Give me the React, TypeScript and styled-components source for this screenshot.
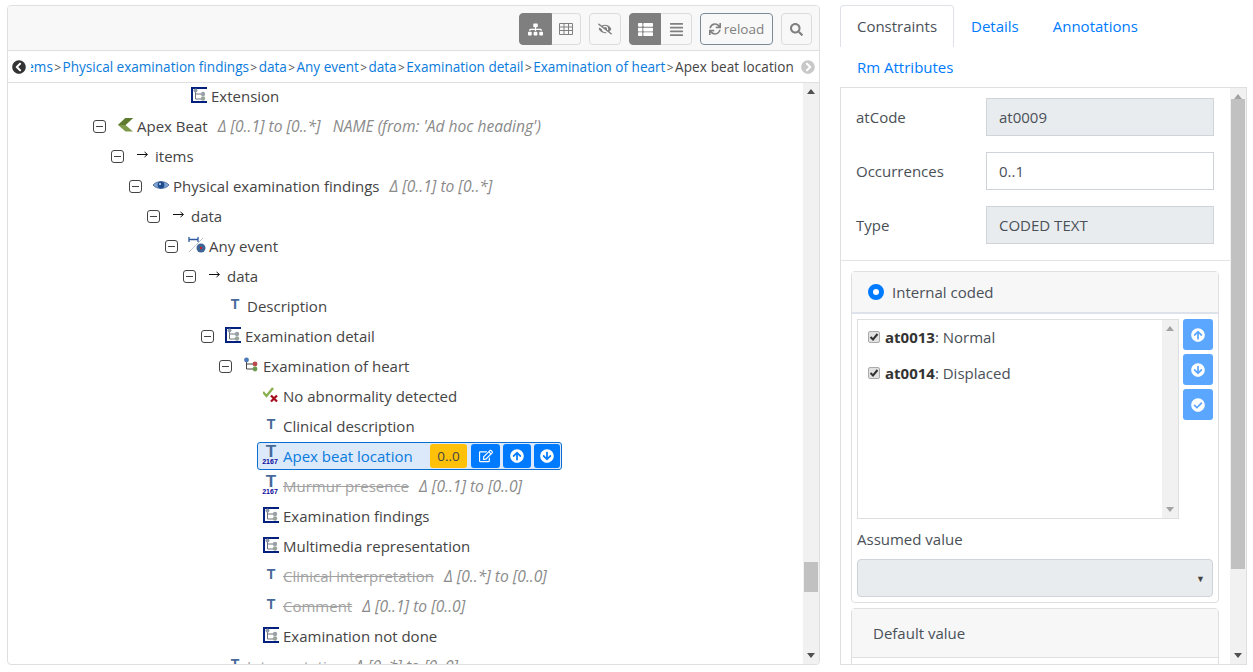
import React from 'react';
import styled, { createGlobalStyle } from 'styled-components';
import {
  FaSitemap, FaEyeSlash, FaThList, FaAlignJustify, FaSync, FaSearch,
  FaChevronCircleLeft, FaChevronCircleRight, FaRegEdit, FaArrowCircleUp, FaArrowCircleDown, FaCheckCircle,
} from 'react-icons/fa';

const Global = createGlobalStyle`
  html, body { margin: 0; padding: 0; background: #fff; overflow: hidden; }
  body { font-family: "Open Sans", "Noto Sans", "Liberation Sans", sans-serif; font-size: 14px; color: #495057; }
  * { box-sizing: border-box; }
`;

const Page = styled.div`
  display: flex; gap: 20px; width: 1253px; height: 672px; padding: 5px 6px 7px 7px;
`;
const LeftPanel = styled.section`
  width: 813px; height: 660px; display: flex; flex-direction: column; border: 1px solid #dfdfdf; border-radius: 4px; overflow: hidden;
`;
const Toolbar = styled.div`
  height: 45px; flex: none; background: #f8f8f8; border-bottom: 1px solid #dfdfdf; display: flex; justify-content: flex-end; align-items: flex-start; padding: 7px 7px 0 0; gap: 8px;
`;
const Group = styled.div`display: flex;`;
const ToolBtn = styled.button<{ $active?: boolean; $w: number; $pos?: 'l' | 'r' }>`
  width: ${p => p.$w}px; height: 32px; padding: 0; display: flex; align-items: center; justify-content: center; gap: 3px;
  font: inherit; font-size: 13.5px; color: ${p => (p.$active ? '#fff' : '#808080')};
  background: ${p => (p.$active ? '#7f7f7f' : '#f8f8f8')};
  border: 1px solid ${p => (p.$active ? '#7f7f7f' : '#dcdcdc')};
  border-radius: ${p => (p.$pos === 'l' ? '4px 0 0 4px' : p.$pos === 'r' ? '0 4px 4px 0' : '4px')};
  ${p => (p.$pos === 'r' ? 'border-left: none;' : '')}
`;
const ReloadBtn = styled(ToolBtn)`border-color: #7c8a97;`;
const Crumbs = styled.div`
  height: 32px; flex: none; border-bottom: 1px solid #dfdfdf; display: flex; align-items: center; padding: 0 4px 0 4px;
`;
const CrumbTrack = styled.div`
  flex: 1; min-width: 0; margin: 1px 4px 0 5px; overflow: hidden; display: flex; justify-content: flex-end; white-space: nowrap; font-size: 13.55px; color: #444;
`;
const CrumbLink = styled.span`color: #0a7bdc; flex: none;`;
const CrumbSep = styled.span`color: #555; flex: none; margin: 0 1.4px; font-size: 12px; line-height: 19px;`;
const CrumbLast = styled.span`flex: none; margin-right: 3px; letter-spacing: 0.1px;`;
const TreeWrap = styled.div`flex: 1; min-height: 0; display: flex;`;
const Tree = styled.div`flex: 1; min-width: 0; overflow: hidden; margin-top: -2px;`;
const Row = styled.div<{ $level: number }>`
  height: 30px; display: flex; align-items: center; padding-left: ${p => 85 + 18 * p.$level}px; white-space: nowrap; font-size: 15px; color: #444;
`;
const Slot = styled.span<{ $leaf?: boolean }>`
  width: ${p => (p.$leaf ? 20 : 18)}px; flex: none; display: flex;
`;
const Expander = styled.span`
  width: 13px; height: 13px; border: 1px solid #444; border-radius: 3px; position: relative; display: block;
  &::after { content: ''; position: absolute; left: 2px; right: 2px; top: 5px; height: 1px; background: #444; }
`;
const Node = styled.div<{ $selected?: boolean }>`
  display: flex; align-items: center; height: 28px; padding-left: 5px; border: 1px solid ${p => (p.$selected ? '#0a6fd1' : 'transparent')};
  border-radius: 3px; background: ${p => (p.$selected ? '#dce9fa' : 'transparent')}; ${p => (p.$selected ? 'width: 305px;' : '')}
`;
const IconSlot = styled.span`
  width: 16px; height: 16px; flex: none; display: flex; align-items: center; justify-content: center; margin-right: 4px; margin-top: -2px;
  svg { flex: none; }
`;
const Label = styled.span<{ $struck?: boolean; $link?: boolean }>`
  color: ${p => (p.$struck ? '#a2a2a2' : p.$link ? '#0a7bdc' : '#444')};
  text-decoration: ${p => (p.$struck ? 'line-through' : 'none')};
`;
const Note = styled.span`margin-left: 10px; font-style: italic; color: #8a8a8a; white-space: pre; font-size: 15.6px;`;
const Actions = styled.span`margin-left: auto; display: flex; gap: 3px; padding-right: 1px;`;
const Occ = styled.span`width: 37px; height: 24px; background: #ffc107; border-radius: 3px; display: flex; align-items: center; justify-content: center; color: #444; margin-right: 1px; font-size: 13.5px;`;
const ActionBtn = styled.span<{ $w: number }>`width: ${p => p.$w}px; height: 24px; background: #007bff; border-radius: 3px; display: flex; align-items: center; justify-content: center; color: #fff; font-size: 14px;`;
const Scrollbar = styled.div`width: 16px; flex: none; background: #f1f1f1; display: flex; flex-direction: column; align-items: center; position: relative;`;
const ArrowUp = styled.span<{ $light?: boolean }>`width: 0; height: 0; margin-top: 6px; border: 4px solid transparent; border-top: none; border-bottom: 5px solid ${p => (p.$light ? '#a3a3a3' : '#505050')};`;
const ArrowDown = styled.span<{ $light?: boolean }>`width: 0; height: 0; margin-top: auto; margin-bottom: 6px; border: 4px solid transparent; border-bottom: none; border-top: 5px solid ${p => (p.$light ? '#a3a3a3' : '#505050')};`;
const Thumb = styled.div<{ $top: number; $h: number }>`width: 14px; height: ${p => p.$h}px; margin-top: ${p => p.$top}px; background: #c1c1c1; flex: none;`;

const RightPanel = styled.section`width: 407px; height: 660px; display: flex; flex-direction: column;`;
const Tabs = styled.nav`display: flex; flex-wrap: wrap; flex: none; height: 82px; align-content: flex-start; font-size: 15px;`;
const Tab = styled.span<{ $active?: boolean }>`
  height: 42px; width: ${p => (p.$active ? '114px' : 'auto')}; padding: 0 16px 2px; display: flex; align-items: center; justify-content: center; color: ${p => (p.$active ? '#495057' : '#007bff')};
  border: 1px solid ${p => (p.$active ? '#dee2e6' : 'transparent')}; border-bottom: none; border-radius: 4px 4px 0 0;
  ${p => (p.$active ? 'background:#fff;' : '')}
`;
const TabBreak = styled.span`flex-basis: 100%; height: 0;`;
const TabSecond = styled(Tab)`height: 40px;`;
const Content = styled.div`flex: 1; min-height: 0; border: 1px solid #dfdfdf; display: flex;`;
const Form = styled.div`flex: 1; min-width: 0; overflow: hidden; padding: 10px 0 0 0;`;
const Field = styled.div`display: flex; align-items: center; height: 38px; margin-bottom: 16px; padding-left: 15px; font-size: 15px;`;
const FieldLabel = styled.label`width: 130px; flex: none; color: #495057;`;
const Input = styled.div<{ $off?: boolean }>`
  width: 228px; height: 38px; border: 1px solid #ced4da; padding: 0 12px; display: flex; align-items: center; color: #495057;
  background: ${p => (p.$off ? '#e9ecef' : '#fff')};
`;
const Rule = styled.hr`margin: 0 0 10px 0; border: 0; border-top: 1px solid #e4e4e4;`;
const Card = styled.div`margin: 0 10px 5px 10px; border: 1px solid #dfdfdf; border-radius: 4px; width: 368px;`;
const CardHead = styled.div`height: 42px; background: #f7f7f7; border-bottom: 2px solid #dee2ea; display: flex; align-items: center; padding-left: 16px; font-size: 15px; gap: 8px;`;
const Radio = styled.span`width: 16px; height: 16px; border-radius: 50%; border: 5px solid #007bff; background: #fff; flex: none;`;
const CardBody = styled.div`padding: 5px 5px 5px 5px;`;
const ListRow = styled.div`display: flex; gap: 4px;`;
const ListBox = styled.div`width: 322px; height: 200px; border: 1px solid #dfdfdf; display: flex;`;
const Items = styled.div`flex: 1; padding: 0 0 0 10px; margin-top: -1px;`;
const Item = styled.div`height: 36px; display: flex; align-items: center; gap: 5px; font-size: 15px; color: #495057;`;
const Check = styled.span`width: 12px; height: 12px; border: 1px solid #aaa; border-radius: 2px; background: #e2e2e2; display: flex; align-items: center; justify-content: center; flex: none;`;
const Code = styled.b`color: #333; font-weight: 700;`;
const MoveCol = styled.div`display: flex; flex-direction: column; gap: 4px;`;
const MoveBtn = styled.span`width: 30px; height: 31px; background: #5ba6ff; border-radius: 3px; color: #fff; display: flex; align-items: center; justify-content: center; font-size: 14px;`;
const AssumedLabel = styled.div`margin-top: 5px; height: 30px; margin-bottom: 5px; font-size: 15px; display: flex; align-items: center; color: #495057;`;
const SelectBox = styled.div`width: 356px; height: 38px; background: #e9ecef; border: 1px solid #ced4da; border-radius: 4px; display: flex; align-items: center; justify-content: flex-end; padding-right: 7px; color: #444; font-size: 9px;`;
const CardHeadPlain = styled.div`height: 49px; background: #f7f7f7; border-bottom: 1px solid #dfdfdf; display: flex; align-items: center; padding-left: 21px; font-size: 15px;`;
const CardFill = styled.div`height: 60px;`;

const TIcon = ({ coded }: { coded?: boolean }) => (
  <svg width="18" height="20" viewBox="0 0 18 20">
    <text x="9" y={coded ? 12 : 14} textAnchor="middle" fontSize={coded ? 17 : 14} fontWeight="700" fontFamily="Liberation Sans, sans-serif" fill="#46689a">T</text>
    {coded && <text x="8" y="19" textAnchor="middle" fontSize="7" fontWeight="700" fontFamily="Liberation Sans, sans-serif" fill="#0a0a9a">2167</text>}
  </svg>
);
const GridIcon = () => (
  <svg width="14" height="12" viewBox="0 0 14 12">
    <path d="M.5.5h13v11H.5zM.5 4h13M.5 7.5h13M5 .5v11M9.5.5v11" fill="none" stroke="#808080" strokeWidth="1" />
  </svg>
);
const ClusterIcon = () => (
  <svg width="16" height="16" viewBox="0 0 16 16">
    <path d="M16 1H1v14h15" fill="none" stroke="#04207e" strokeWidth="2" />
    <path d="M4.5 3v9H11M4.5 7H11" fill="none" stroke="#70757c" strokeWidth="1" />
    <circle cx="4.5" cy="3.5" r="2" fill="#8f9aa8" /><circle cx="12" cy="7" r="2.2" fill="#9aa0a8" /><circle cx="12" cy="11.5" r="2.2" fill="#9aa59a" />
  </svg>
);
const TreeIcon = () => (
  <svg width="16" height="16" viewBox="0 0 16 16">
    <path d="M3.5 3v9H11M3.5 7H11" fill="none" stroke="#444" strokeWidth="1" />
    <circle cx="3.5" cy="3" r="2.4" fill="#4c78b8" /><circle cx="12" cy="7" r="2.4" fill="#b8484c" /><circle cx="12" cy="12" r="2.4" fill="#6a9a4c" />
  </svg>
);
const ArrowIcon = () => (
  <svg width="16" height="16" viewBox="0 0 16 16">
    <path d="M2 7.5h10M9.5 5l3 2.5-3 2.5" fill="none" stroke="#111" strokeWidth="1" />
  </svg>
);
const ChevronIcon = () => (
  <svg width="16" height="16" viewBox="0 0 16 16">
    <path d="M8.5 1 1 8l7.5 6.5H16L8.5 8 16 1z" fill="#7f9a4a" />
    <path d="M8.5 1 1 8h7.5L16 1z" fill="#5d7a2e" />
  </svg>
);
const EyeIcon = () => (
  <svg width="16" height="16" viewBox="0 0 16 16">
    <path d="M0 8C3 3.5 13 3.5 16 8 13 12.5 3 12.5 0 8z" fill="#7fa2cf" stroke="#3b5f96" strokeWidth=".8" />
    <circle cx="8" cy="8" r="3.4" fill="#1f4b8f" /><circle cx="7" cy="7" r="1" fill="#cfe0f5" />
  </svg>
);
const EventIcon = () => (
  <svg width="18" height="18" viewBox="0 0 18 18">
    <path d="M1 1v5M10 1v5M1 3.5h9" fill="none" stroke="#2d5aa0" strokeWidth="1.3" />
    <path d="M1 16 15 2" stroke="#b8c0c8" strokeWidth="1" />
    <circle cx="13" cy="12" r="4.5" fill="#3c6595" /><circle cx="13" cy="12" r="1.2" fill="#d0202a" />
  </svg>
);
const BoolIcon = () => (
  <svg width="16" height="16" viewBox="0 0 16 16">
    <path d="M0 5 3.5 9 10 1" fill="none" stroke="#8ab04e" strokeWidth="2.4" />
    <path d="M8 8.5l6 6M14 8.5l-6 6" fill="none" stroke="#a80c1c" strokeWidth="2.2" />
  </svg>
);
const CheckMark = () => (
  <svg width="10" height="10" viewBox="0 0 10 10"><path d="M1.5 5 4 7.5 8.5 2" fill="none" stroke="#333" strokeWidth="2" /></svg>
);

type TreeItem = {
  level: number; kind: 'cluster' | 'tree' | 'arrow' | 'chev' | 'eye' | 'event' | 'bool' | 't' | 'coded';
  label: string; note?: string; open?: boolean; struck?: boolean; selected?: boolean;
};
const rows: TreeItem[] = [
  { level: 4, kind: 'cluster', label: 'Extension' },
  { level: 0, kind: 'chev', label: 'Apex Beat', note: "Δ [0..1] to [0..*]   NAME (from: 'Ad hoc heading')", open: true },
  { level: 1, kind: 'arrow', label: 'items', open: true },
  { level: 2, kind: 'eye', label: 'Physical examination findings', note: 'Δ [0..1] to [0..*]', open: true },
  { level: 3, kind: 'arrow', label: 'data', open: true },
  { level: 4, kind: 'event', label: 'Any event', open: true },
  { level: 5, kind: 'arrow', label: 'data', open: true },
  { level: 6, kind: 't', label: 'Description' },
  { level: 6, kind: 'cluster', label: 'Examination detail', open: true },
  { level: 7, kind: 'tree', label: 'Examination of heart', open: true },
  { level: 8, kind: 'bool', label: 'No abnormality detected' },
  { level: 8, kind: 't', label: 'Clinical description' },
  { level: 8, kind: 'coded', label: 'Apex beat location', selected: true },
  { level: 8, kind: 'coded', label: 'Murmur presence', note: 'Δ [0..1] to [0..0]', struck: true },
  { level: 8, kind: 'cluster', label: 'Examination findings' },
  { level: 8, kind: 'cluster', label: 'Multimedia representation' },
  { level: 8, kind: 't', label: 'Clinical interpretation', note: 'Δ [0..*] to [0..0]', struck: true },
  { level: 8, kind: 't', label: 'Comment', note: 'Δ [0..1] to [0..0]', struck: true },
  { level: 8, kind: 'cluster', label: 'Examination not done' },
  { level: 6, kind: 't', label: 'Interpretation', note: 'Δ [0..*] to [0..0]', struck: true },
];
const icons = {
  cluster: <ClusterIcon />, tree: <TreeIcon />, arrow: <ArrowIcon />, chev: <ChevronIcon />, eye: <EyeIcon />,
  event: <EventIcon />, bool: <BoolIcon />, t: <TIcon />, coded: <TIcon coded />,
};
const crumbs = ['items', 'Physical examination findings', 'data', 'Any event', 'data', 'Examination detail', 'Examination of heart'];

export default function App() {
  return (
    <Page>
      <Global />
      <LeftPanel>
        <Toolbar>
          <Group>
            <ToolBtn $active $w={33} $pos="l"><FaSitemap size={15} /></ToolBtn>
            <ToolBtn $w={29} $pos="r"><GridIcon /></ToolBtn>
          </Group>
          <ToolBtn $w={32}><FaEyeSlash size={14} /></ToolBtn>
          <Group>
            <ToolBtn $active $w={32} $pos="l"><FaThList size={15} /></ToolBtn>
            <ToolBtn $w={31} $pos="r"><FaAlignJustify size={15} /></ToolBtn>
          </Group>
          <ReloadBtn $w={73}><FaSync size={12} />reload</ReloadBtn>
          <ToolBtn $w={31}><FaSearch size={13} /></ToolBtn>
        </Toolbar>
        <Crumbs>
          <FaChevronCircleLeft size={14} color="#333" />
          <CrumbTrack>
            {crumbs.map((c, i) => (
              <React.Fragment key={i}>
                <CrumbLink>{c}</CrumbLink><CrumbSep>&gt;</CrumbSep>
              </React.Fragment>
            ))}
            <CrumbLast>Apex beat location</CrumbLast>
          </CrumbTrack>
          <FaChevronCircleRight size={14} color="#c8c8c8" />
        </Crumbs>
        <TreeWrap>
          <Tree>
            {rows.map(r => (
              <Row key={r.label + r.level} $level={r.level}>
                <Slot $leaf={!r.open}>{r.open && <Expander />}</Slot>
                <Node $selected={r.selected}>
                  <IconSlot>{icons[r.kind]}</IconSlot>
                  <Label $struck={r.struck} $link={r.selected}>{r.label}</Label>
                  {r.note && <Note>{r.note}</Note>}
                  {r.selected && (
                    <Actions>
                      <Occ>0..0</Occ>
                      <ActionBtn $w={29}><FaRegEdit /></ActionBtn>
                      <ActionBtn $w={28}><FaArrowCircleUp /></ActionBtn>
                      <ActionBtn $w={26}><FaArrowCircleDown /></ActionBtn>
                    </Actions>
                  )}
                </Node>
              </Row>
            ))}
          </Tree>
          <Scrollbar>
            <ArrowUp />
            <Thumb $top={468} $h={30} />
            <ArrowDown />
          </Scrollbar>
        </TreeWrap>
      </LeftPanel>

      <RightPanel>
        <Tabs>
          <Tab $active>Constraints</Tab>
          <Tab>Details</Tab>
          <Tab>Annotations</Tab>
          <TabBreak />
          <TabSecond>Rm Attributes</TabSecond>
        </Tabs>
        <Content>
          <Form>
            <Field><FieldLabel>atCode</FieldLabel><Input $off>at0009</Input></Field>
            <Field><FieldLabel>Occurrences</FieldLabel><Input>0..1</Input></Field>
            <Field><FieldLabel>Type</FieldLabel><Input $off>CODED TEXT</Input></Field>
            <Rule />
            <Card>
              <CardHead><Radio />Internal coded</CardHead>
              <CardBody>
                <ListRow>
                  <ListBox>
                    <Items>
                      <Item><Check><CheckMark /></Check><span><Code>at0013</Code>: Normal</span></Item>
                      <Item><Check><CheckMark /></Check><span><Code>at0014</Code>: Displaced</span></Item>
                    </Items>
                    <Scrollbar>
                      <ArrowUp $light />
                      <ArrowDown $light />
                    </Scrollbar>
                  </ListBox>
                  <MoveCol>
                    <MoveBtn><FaArrowCircleUp /></MoveBtn>
                    <MoveBtn><FaArrowCircleDown /></MoveBtn>
                    <MoveBtn><FaCheckCircle /></MoveBtn>
                  </MoveCol>
                </ListRow>
                <AssumedLabel>Assumed value</AssumedLabel>
                <SelectBox>▼</SelectBox>
              </CardBody>
            </Card>
            <Card>
              <CardHeadPlain>Default value</CardHeadPlain>
              <CardFill />
            </Card>
          </Form>
          <Scrollbar>
            <ArrowUp $light />
            <Thumb $top={0} $h={470} />
            <ArrowDown />
          </Scrollbar>
        </Content>
      </RightPanel>
    </Page>
  );
}
